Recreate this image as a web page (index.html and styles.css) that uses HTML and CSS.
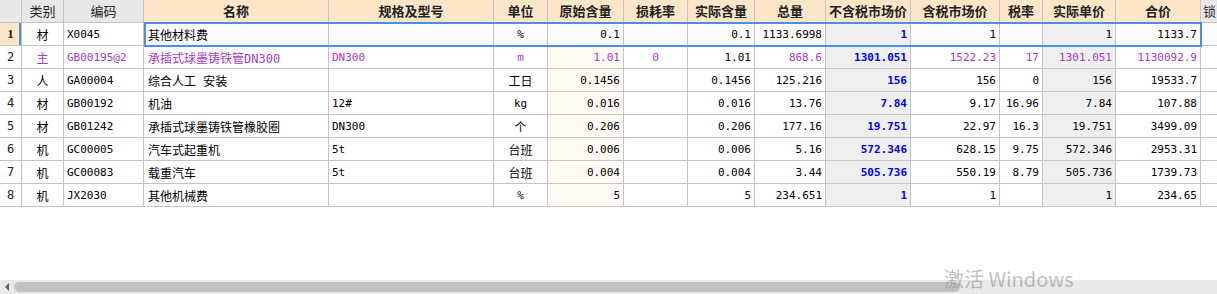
FILE: index.html
```html
<!DOCTYPE html>
<html lang="zh">
<head>
<meta charset="utf-8">
<title>材料表</title>
<link rel="stylesheet" href="styles.css">
</head>
<body>
<div class="screen">
  <div class="grid">
    <table class="sheet">
      <colgroup>
        <col class="c-no"><col class="c-type"><col class="c-code"><col class="c-name"><col class="c-spec"><col class="c-unit"><col class="c-orig"><col class="c-loss"><col class="c-real"><col class="c-total"><col class="c-price"><col class="c-tax-price"><col class="c-rate"><col class="c-unit-price"><col class="c-sum"><col class="c-lock">
      </colgroup>
      <thead>
        <tr>
          <th class="h-gray"></th>
          <th class="h-gray">类别</th>
          <th class="h-gray">编码</th>
          <th class="h-or">名称</th>
          <th class="h-or">规格及型号</th>
          <th class="h-or">单位</th>
          <th class="h-or">原始含量</th>
          <th class="h-or">损耗率</th>
          <th class="h-or">实际含量</th>
          <th class="h-or">总量</th>
          <th class="h-or">不含税市场价</th>
          <th class="h-or">含税市场价</th>
          <th class="h-or">税率</th>
          <th class="h-or">实际单价</th>
          <th class="h-or">合价</th>
          <th class="h-gray h-lock">锁</th>
        </tr>
      </thead>
      <tbody>
        <tr class="sel">
          <td class="no cur">1</td><td class="ctr cn">材</td><td class="txt">X0045</td><td class="txt cn name">其他材料费</td><td class="txt"></td><td class="ctr">%</td><td class="num orig">0.1</td><td class="ctr"></td><td class="num">0.1</td><td class="num">1133.6998</td><td class="num gray strong">1</td><td class="num">1</td><td class="num"></td><td class="num gray">1</td><td class="num">1133.7</td><td class="lock"></td>
        </tr>
        <tr class="main">
          <td class="no">2</td><td class="ctr cn">主</td><td class="txt">GB00195@2</td><td class="txt cn name">承插式球墨铸铁管DN300</td><td class="txt">DN300</td><td class="ctr">m</td><td class="num orig">1.01</td><td class="ctr">0</td><td class="num black">1.01</td><td class="num">868.6</td><td class="num gray strong">1301.051</td><td class="num">1522.23</td><td class="num">17</td><td class="num gray">1301.051</td><td class="num">1130092.9</td><td class="lock"></td>
        </tr>
        <tr>
          <td class="no">3</td><td class="ctr cn">人</td><td class="txt">GA00004</td><td class="txt cn name">综合人工 安装</td><td class="txt"></td><td class="ctr cn">工日</td><td class="num orig">0.1456</td><td class="ctr"></td><td class="num">0.1456</td><td class="num">125.216</td><td class="num gray strong">156</td><td class="num">156</td><td class="num">0</td><td class="num gray">156</td><td class="num">19533.7</td><td class="lock"></td>
        </tr>
        <tr>
          <td class="no">4</td><td class="ctr cn">材</td><td class="txt">GB00192</td><td class="txt cn name">机油</td><td class="txt">12#</td><td class="ctr">kg</td><td class="num orig">0.016</td><td class="ctr"></td><td class="num">0.016</td><td class="num">13.76</td><td class="num gray strong">7.84</td><td class="num">9.17</td><td class="num">16.96</td><td class="num gray">7.84</td><td class="num">107.88</td><td class="lock"></td>
        </tr>
        <tr>
          <td class="no">5</td><td class="ctr cn">材</td><td class="txt">GB01242</td><td class="txt cn name">承插式球墨铸铁管橡胶圈</td><td class="txt">DN300</td><td class="ctr cn">个</td><td class="num orig">0.206</td><td class="ctr"></td><td class="num">0.206</td><td class="num">177.16</td><td class="num gray strong">19.751</td><td class="num">22.97</td><td class="num">16.3</td><td class="num gray">19.751</td><td class="num">3499.09</td><td class="lock"></td>
        </tr>
        <tr>
          <td class="no">6</td><td class="ctr cn">机</td><td class="txt">GC00005</td><td class="txt cn name">汽车式起重机</td><td class="txt">5t</td><td class="ctr cn">台班</td><td class="num orig">0.006</td><td class="ctr"></td><td class="num">0.006</td><td class="num">5.16</td><td class="num gray strong">572.346</td><td class="num">628.15</td><td class="num">9.75</td><td class="num gray">572.346</td><td class="num">2953.31</td><td class="lock"></td>
        </tr>
        <tr>
          <td class="no">7</td><td class="ctr cn">机</td><td class="txt">GC00083</td><td class="txt cn name">载重汽车</td><td class="txt">5t</td><td class="ctr cn">台班</td><td class="num orig">0.004</td><td class="ctr"></td><td class="num">0.004</td><td class="num">3.44</td><td class="num gray strong">505.736</td><td class="num">550.19</td><td class="num">8.79</td><td class="num gray">505.736</td><td class="num">1739.73</td><td class="lock"></td>
        </tr>
        <tr>
          <td class="no">8</td><td class="ctr cn">机</td><td class="txt">JX2030</td><td class="txt cn name">其他机械费</td><td class="txt"></td><td class="ctr">%</td><td class="num orig">5</td><td class="ctr"></td><td class="num">5</td><td class="num">234.651</td><td class="num gray strong">1</td><td class="num">1</td><td class="num"></td><td class="num gray">1</td><td class="num">234.65</td><td class="lock"></td>
        </tr>
      </tbody>
    </table>
    <div class="selbox"></div>
  </div>
  <div class="hscroll">
    <span class="arrow"></span>
    <span class="thumb"></span>
  </div>
  <div class="watermark">激活 Windows</div>
</div>
</body>
</html>
```

FILE: styles.css
```css
html, body {
  margin: 0;
  padding: 0;
  background: #ffffff;
}

.screen {
  position: relative;
  width: 1217px;
  height: 294px;
  overflow: hidden;
  background: #ffffff;
}

.grid {
  position: relative;
  height: 280px;
  overflow: hidden;
}

.sheet {
  border-collapse: separate;
  border-spacing: 0;
  table-layout: fixed;
  width: 1241px;
  font-family: "DejaVu Sans Mono", "Noto Sans CJK SC", monospace;
  font-size: 11px;
  color: #000000;
}

.c-no { width: 22px; }
.c-type { width: 42px; }
.c-code { width: 80px; }
.c-name { width: 185px; }
.c-spec { width: 165px; }
.c-unit { width: 54px; }
.c-orig { width: 76px; }
.c-loss { width: 64px; }
.c-real { width: 67px; }
.c-total { width: 71px; }
.c-price { width: 85px; }
.c-tax-price { width: 89px; }
.c-rate { width: 43px; }
.c-unit-price { width: 73px; }
.c-sum { width: 85px; }
.c-lock { width: 40px; }

.sheet th,
.sheet td {
  box-sizing: border-box;
  height: 23px;
  padding: 0 3px;
  border-right: 1px solid #c4c4c4;
  border-bottom: 1px solid #c4c4c4;
  white-space: nowrap;
  overflow: hidden;
  vertical-align: middle;
}

.sheet th {
  font-family: "Noto Sans CJK SC", sans-serif;
  font-size: 13px;
  font-weight: normal;
  color: #222222;
  text-align: center;
  line-height: 20px;
}

.sheet th.h-gray {
  background: #e8e8e8;
}

.sheet th.h-lock {
  text-align: left;
  padding-left: 2px;
  color: #333333;
}

.sheet th.h-or {
  background: #fde6c8;
  font-weight: bold;
}

.sheet td.no {
  text-align: center;
  font-size: 12px;
  color: #222222;
  background: #ffffff;
}

.sheet td.no.cur {
  background: #fde6c8;
  font-family: "Liberation Serif", serif;
  font-weight: bold;
  font-size: 13px;
  box-shadow: inset -2px 0 0 #4a90e2;
}

.sheet td.txt {
  text-align: left;
}

.sheet td.ctr {
  text-align: center;
}

.sheet td.num {
  text-align: right;
}

.sheet td.cn {
  font-size: 12px;
}

.sheet td.name {
  font-size: 12px;
  padding-left: 4px;
}

.sheet td.orig {
  background: #fffaf4;
}

.sheet td.gray {
  background: #efefef;
}

.sheet td.strong {
  color: #0000ff;
  font-weight: bold;
}

.sheet td.lock {
  background: #ffffff;
}

.sel td:nth-child(n+4) {
  background: #fbfbfb;
}

.sel td.gray {
  background: #efefef;
}

.main td {
  color: #a73cc6;
}

.main td.black {
  color: #000000;
}

.main td.strong {
  color: #0000ff;
}

.selbox {
  position: absolute;
  left: 144px;
  top: 22px;
  width: 1058px;
  height: 25px;
  box-sizing: border-box;
  border: 2px solid #4a90e2;
  pointer-events: none;
}

.hscroll {
  position: relative;
  height: 14px;
  background: #e9e9e9;
  display: flex;
  align-items: center;
}

.hscroll .arrow {
  width: 0;
  height: 0;
  margin-left: 5px;
  border-top: 4px solid transparent;
  border-bottom: 4px solid transparent;
  border-right: 4px solid #606060;
}

.hscroll .thumb {
  margin-left: 5px;
  width: 946px;
  height: 10px;
  border-radius: 5px;
  background: #c1c1c1;
}

.watermark {
  position: absolute;
  left: 944px;
  top: 266px;
  font-family: "Noto Sans CJK SC", "Open Sans", sans-serif;
  font-size: 20px;
  line-height: 26px;
  color: rgba(150, 150, 150, 0.6);
  white-space: nowrap;
}
```
